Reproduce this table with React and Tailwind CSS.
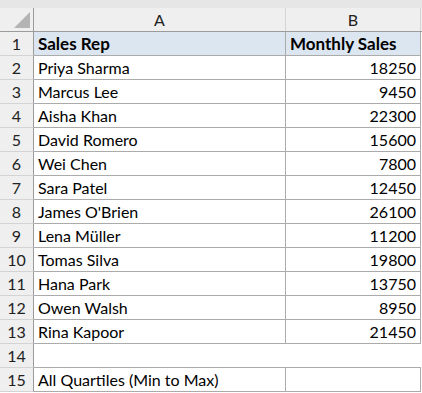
const rows = [
  ['Priya Sharma', 18250],
  ['Marcus Lee', 9450],
  ['Aisha Khan', 22300],
  ['David Romero', 15600],
  ['Wei Chen', 7800],
  ['Sara Patel', 12450],
  ["James O'Brien", 26100],
  ['Lena Müller', 11200],
  ['Tomas Silva', 19800],
  ['Hana Park', 13750],
  ['Owen Walsh', 8950],
  ['Rina Kapoor', 21450],
]

function RowNum({ n }) {
  return (
    <div className="flex h-full w-[34px] shrink-0 items-center justify-center border-r border-b border-r-[#9b9b9b] border-b-[#d4d4d4] bg-[#efefef] text-[#222]">
      {n}
    </div>
  )
}

export default function App() {
  return (
    <div
      className="h-[393px] w-[422px] overflow-hidden bg-white text-[16px] leading-none text-black"
      style={{ fontFamily: 'Lato, "Liberation Sans", sans-serif' }}
    >
      <div className="h-[8px] bg-[#e6e6e6]" />

      {/* column headers */}
      <div className="flex h-[24px] border-b border-[#9b9b9b] bg-[#efefef] text-[#222]">
        <div className="relative w-[34px] shrink-0 border-r border-[#9b9b9b]">
          <div className="absolute right-[3px] bottom-[3px] h-0 w-0 border-t-[16px] border-r-[16px] border-t-transparent border-r-[#b4b4b4]" />
        </div>
        <div className="flex w-[252px] items-center justify-center border-r border-[#d4d4d4]">A</div>
        <div className="flex w-[135px] items-center justify-center border-r border-[#d4d4d4]">B</div>
        <div className="flex-1" />
      </div>

      {/* row 1 */}
      <div className="flex h-[24px]">
        <RowNum n={1} />
        <div className="flex w-[252px] items-center border-r border-b border-[#ababab] bg-[#dce6f1] pl-[4px] text-[17px] font-bold">Sales Rep</div>
        <div className="flex w-[135px] items-center border-r border-b border-[#ababab] bg-[#dce6f1] pl-[4px] text-[17px] font-bold">Monthly Sales</div>
      </div>

      {rows.map(([name, sales], i) => (
        <div key={name} className="flex h-[24px]">
          <RowNum n={i + 2} />
          <div className="flex w-[252px] items-center border-r border-b border-[#ababab] pl-[4px]">{name}</div>
          <div className="flex w-[135px] items-center justify-end border-r border-b border-[#ababab] pr-[4px]">{sales}</div>
        </div>
      ))}

      <div className="flex h-[24px]">
        <RowNum n={14} />
        <div className="w-[252px] border-b border-[#ababab]" />
        <div className="w-[135px] border-b border-[#ababab]" />
      </div>

      <div className="flex h-[24px]">
        <RowNum n={15} />
        <div className="flex w-[252px] items-center border-r border-b border-[#ababab] pl-[4px]">All Quartiles (Min to Max)</div>
        <div className="w-[135px] border-r border-b border-[#ababab]" />
      </div>
    </div>
  )
}
